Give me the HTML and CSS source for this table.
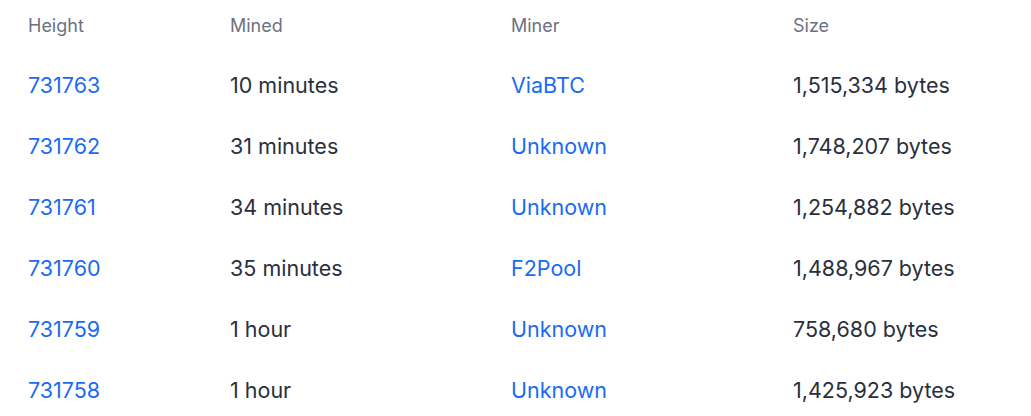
FILE: index.html
```html
<!DOCTYPE html>
<html>
<head>
<meta charset="utf-8">
<link rel="stylesheet" href="styles.css">
</head>
<body>
<div class="blocks">
  <div class="row head">
    <div class="cell">Height</div>
    <div class="cell">Mined</div>
    <div class="cell">Miner</div>
    <div class="cell">Size</div>
  </div>
  <div class="row">
    <div class="cell link">731763</div>
    <div class="cell">10 minutes</div>
    <div class="cell link">ViaBTC</div>
    <div class="cell">1,515,334 bytes</div>
  </div>
  <div class="row">
    <div class="cell link">731762</div>
    <div class="cell">31 minutes</div>
    <div class="cell link">Unknown</div>
    <div class="cell">1,748,207 bytes</div>
  </div>
  <div class="row">
    <div class="cell link">731761</div>
    <div class="cell">34 minutes</div>
    <div class="cell link">Unknown</div>
    <div class="cell">1,254,882 bytes</div>
  </div>
  <div class="row">
    <div class="cell link">731760</div>
    <div class="cell">35 minutes</div>
    <div class="cell link">F2Pool</div>
    <div class="cell">1,488,967 bytes</div>
  </div>
  <div class="row">
    <div class="cell link">731759</div>
    <div class="cell">1 hour</div>
    <div class="cell link">Unknown</div>
    <div class="cell">758,680 bytes</div>
  </div>
  <div class="row">
    <div class="cell link">731758</div>
    <div class="cell">1 hour</div>
    <div class="cell link">Unknown</div>
    <div class="cell">1,425,923 bytes</div>
  </div>
</div>
</body>
</html>
```
FILE: styles.css
```css
html, body {
  margin: 0;
  padding: 0;
  background: #ffffff;
}
body {
  font-family: Inter, "Noto Sans", sans-serif;
  color: #2a2f3d;
  overflow: hidden;
}
.blocks {
  padding-left: 28px;
}
.row {
  display: grid;
  grid-template-columns: 202px 281px 282px 1fr;
  align-items: center;
  height: 61px;
  font-size: 21.5px;
}
.row.head {
  height: 50px;
  margin-bottom: 4px;
  font-size: 18px;
  color: #6b7280;
}
.link {
  color: #1a6bf2;
}
```
